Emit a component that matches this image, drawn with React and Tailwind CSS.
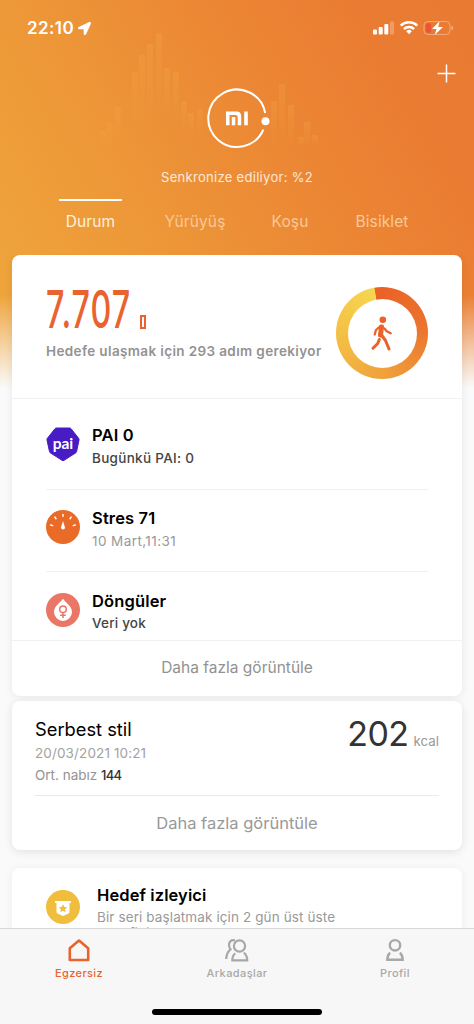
import React from "react";
import { FaLocationArrow } from "react-icons/fa";

const bars = [
  [100, 131, 12], [107, 123, 20], [115, 107, 34],
  [132, 72, 50], [139, 55, 70], [147, 44, 80], [156, 33, 84], [164, 68, 50], [173, 72, 50],
  [181, 101, 34], [188, 113, 24], [197, 109, 24], [271, 101, 42], [279, 84, 58], [288, 105, 40],
  [298, 137, 8], [304, 122, 22], [312, 135, 10],
];

function Wave() {
  return (
    <svg className="absolute left-0 top-0" width="474" height="200" aria-hidden="true">
      <defs>
        <linearGradient id="bar" x1="0" y1="0" x2="0" y2="1">
          <stop offset="0" stopColor="#f3a640" stopOpacity=".32" />
          <stop offset="1" stopColor="#f0a040" stopOpacity=".04" />
        </linearGradient>
      </defs>
      {bars.map(([x, y, h]) => (
        <rect key={x} x={x} y={y} width="6" height={h} rx="1" fill="url(#bar)" />
      ))}
    </svg>
  );
}

function StatusBar() {
  return (
    <div className="flex h-14 items-center justify-between pl-[27px] pr-5">
      <div className="flex items-center gap-[4px]">
        <span className="text-[17px] font-semibold leading-5 tracking-[0.4px]">22:10</span>
        <FaLocationArrow className="size-[13px]" />
      </div>
      <svg width="82" height="16" viewBox="0 0 82 16" fill="#fff">
        <rect x="1" y="9.5" width="4" height="5" rx="1" />
        <rect x="6.7" y="7" width="4" height="7.5" rx="1" />
        <rect x="12.3" y="4" width="4" height="10.500" rx="1" />
        <rect x="18" y="1.500" width="4" height="13" rx="1" opacity=".25" />
        <g fill="none" stroke="#fff" strokeWidth="2.500">
          <path d="M28.700 5.700a12 12 0 0 1 16.600 0" />
          <path d="M31.900 9a7.500 7.500 0 0 1 10.200 0" />
        </g>
        <path d="M34.200 11.200a4 4 0 0 1 5.600 0L37 14.200z" />
        <rect x="52" y="1.500" width="26" height="13" rx="4" fill="none" stroke="#fff" strokeOpacity=".35" />
        <rect x="53.700" y="3.200" width="5.500" height="9.600" rx="2" fill="#ea5532" />
        <path d="M79.500 5.800c2 .8 2 3.600 0 4.400z" opacity=".5" />
        <path d="M67.500 1.200 60 9h4.500l-1.800 6L71 7h-4.700z" />
      </svg>
    </div>
  );
}

function MiLogo() {
  return (
    <svg className="mx-auto block" width="66" height="62" viewBox="204 86 66 62" fill="none">
      <path d="M265.200 112A28.700 28.700 0 1 0 263.400 128.500" stroke="#fff" strokeWidth="2" />
      <circle cx="265.500" cy="120.300" r="4" fill="#fff" />
      <g fill="#fff">
        <path d="M226 110.500h10.500q4.700 0 4.700 4.700V124.300h-3.500v-8.300q0-2-2-2h-6.200V124.300H226z" />
        <rect x="231.800" y="116" width="3.500" height="8.300" />
        <rect x="244.200" y="110.500" width="3.600" height="13.800" />
      </g>
    </svg>
  );
}

function Walker() {
  return (
    <svg width="24" height="38" viewBox="371 313 24 38" fill="none" stroke="#eb6129" strokeLinecap="round" strokeLinejoin="round">
      <circle cx="383.800" cy="318.700" r="3.300" fill="#eb6129" stroke="none" />
      <path d="M382.500 326l-1 8" strokeWidth="5" />
      <path d="M381.500 325l-4.500 4-1.300 4.500M385.500 327.500l2.200 2.700 4 2" strokeWidth="2.300" />
      <path d="M382.500 334l4 5.500 3.500 8.500M380.300 338.500l-1.600 4-4.700 4.700" strokeWidth="3" />
    </svg>
  );
}

function PaiIcon() {
  return (
    <div className="relative grid size-[34px] place-items-center">
      <svg className="absolute inset-0" width="34" height="34" viewBox="0 0 34 34">
        <path d="M10.500 1h13q1 0 1.600.8l7.500 9.500q.6.800.4 1.800l-2.400 11.500q-.2 1-1.200 1.500l-11.300 7.200q-1 .6-2.100 0L4.700 26.100q-1-.5-1.200-1.500L1 13.100q-.2-1 .4-1.800L8.900 1.800Q9.500 1 10.500 1z" fill="#471cc5" stroke="#471cc5" />
      </svg>
      <span className="relative -top-px font-[Lato,sans-serif] text-[15.500px] font-bold leading-4 text-white">pai</span>
    </div>
  );
}

function StressIcon() {
  return (
    <svg width="34" height="34" viewBox="0 0 34 34">
      <circle cx="17" cy="17" r="17" fill="#ea6a28" />
      <path d="M17 11l2 6.500a2 2 0 1 1-4 0z" fill="#fff" />
      <path d="M17 4.500v1.800M8.800 7l1.200 1.700M25.200 7l-1.200 1.700M4.700 15l2 .6M29.300 15l-2 .6" stroke="#fff" strokeWidth="1.500" strokeLinecap="round" />
    </svg>
  );
}

function CycleIcon() {
  return (
    <svg width="34" height="34" viewBox="0 0 34 34" fill="none">
      <circle cx="17" cy="17" r="17" fill="#ea7665" />
      <path d="M17 5.800C19 9.200 26 13 26 19a9 9 0 0 1-18 0C8 13 15 9.200 17 5.800z" fill="#fff" />
      <circle cx="17" cy="16.300" r="3.300" stroke="#ea7665" strokeWidth="1.500" />
      <path d="M17 19.800v5.200M14.200 22.300h5.600" stroke="#ea7665" strokeWidth="1.500" />
    </svg>
  );
}

function GoalIcon() {
  return (
    <svg width="34" height="34" viewBox="0 0 34 34">
      <circle cx="17" cy="17" r="17" fill="#f0bd3c" />
      <path d="M9 11h16v2h-1.500v9q0 1-1 1.400L17 26l-5.500-2.600q-1-.4-1-1.400v-9H9z" fill="#fff" />
      <path d="M17 14.300l1.300 2.600 2.900.4-2.100 2 .5 2.900-2.600-1.400-2.600 1.400.5-2.900-2.100-2 2.900-.4z" fill="#f0bd3c" />
    </svg>
  );
}

function Row({ icon, title, sub, subClass, sizeClass }) {
  return (
    <div className={"mx-[34px] flex items-center gap-3 " + sizeClass}>
      {icon}
      <div className="pt-[3px]">
        <div className="text-[16.500px] font-semibold leading-6 tracking-[0.15px] text-black">{title}</div>
        <div className={"text-[13.500px] leading-[22px] " + subClass}>{sub}</div>
      </div>
    </div>
  );
}

function NavItem({ label, active, children }) {
  return (
    <div className={"flex w-[158px] flex-col items-center " + (active ? "text-[#e9642c]" : "text-[#a8a8a8]")}>
      {children}
      <span className="mt-[3px] text-[11px] font-medium leading-4 tracking-[0.4px]">{label}</span>
    </div>
  );
}

export default function App() {
  return (
    <div className="relative flex h-[1024px] w-[474px] flex-col overflow-hidden bg-[#fafafa] bg-[linear-gradient(180deg,transparent_295px,#fafafa_388px),linear-gradient(60deg,#efa43b_8%,#ed9738_35%,#ec8935_57%,#ea7c32_82%,#e97a32_100%)] bg-[length:474px_390px] bg-no-repeat font-[Inter,sans-serif] text-white">
      <Wave />
      <header className="relative h-[255px] shrink-0">
        <StatusBar />
        <div className="flex h-[31px] justify-end pr-[18px] pt-2">
          <svg width="19" height="19" viewBox="0 0 19 19" stroke="#fff" strokeWidth="1.500"><path d="M.5 9.500h18M9.500.5v18" /></svg>
        </div>
        <MiLogo />
        <div className="mt-[18px] text-center text-[13px] leading-5 tracking-[0.3px] text-white/80">Senkronize ediliyor: %2</div>
        <nav className="mt-3 flex pl-[59px] text-[15.500px] leading-5 tracking-[0.1px] text-[#fac896]">
          <span className="w-[63px] border-t-2 border-white pt-[11px] text-center text-[#fff0dc]">Durum</span>
          <span className="ml-[34px] w-[78px] pt-[13px] text-center">Yürüyüş</span>
          <span className="ml-[17px] w-[78px] pt-[13px] text-center">Koşu</span>
          <span className="ml-[14px] w-[78px] pt-[13px] text-center">Bisiklet</span>
        </nav>
      </header>

      <main className="relative flex min-h-0 flex-1 flex-col overflow-hidden px-3">
        <section className="h-[441px] shrink-0 rounded-lg bg-white shadow-[0_1px_8px_rgba(0,0,0,0.08)]">
          <div className="flex h-[144px] justify-between border-b border-[#f1f1f1] px-[34px] pt-8">
            <div>
              <div className="flex h-[46px] items-end text-[#e8632f]">
                <span className="w-[94px] origin-left scale-x-[0.62] text-[52px] font-medium leading-[46px] tracking-[1.600px]">7.707</span>
                <span className="mb-[4px] h-[14px] w-[6px] border-2 border-[#e8632f]" />
              </div>
              <div className="mt-2 whitespace-nowrap text-[13.500px] font-semibold leading-5 tracking-[0.37px] text-[#929292]">Hedefe ulaşmak için 293 adım gerekiyor</div>
            </div>
            <div className="-ml-4 grid size-[92px] shrink-0 place-items-center rounded-full bg-[conic-gradient(from_-6deg,#ea6027,#eb752e_90deg,#f0a23c_185deg,#f3b942_250deg,#f6d650_356deg,#ea6027_357deg)]">
              <div className="grid size-[69px] place-items-center rounded-full bg-white"><Walker /></div>
            </div>
          </div>
          <Row sizeClass="h-[91px] border-b border-[#f1f1f1]" icon={<PaiIcon />} title="PAI 0" sub="Bugünkü PAI: 0" subClass="font-medium text-[#444] tracking-[0.3px]" />
          <Row sizeClass="h-[82px] border-b border-[#f1f1f1] pb-[7px]" icon={<StressIcon />} title="Stres 71" sub="10 Mart,11:31" subClass="text-[#999] tracking-[0.42px]" />
          <Row sizeClass="h-[68px] pt-[7px]" icon={<CycleIcon />} title="Döngüler" sub="Veri yok" subClass="-mt-px font-medium text-[#444] tracking-[0.2px]" />
          <div className="flex h-[56px] items-center justify-center border-t border-[#f1f1f1] pb-px text-[15.500px] text-[#929292]">Daha fazla görüntüle</div>
        </section>

        <section className="mt-[5px] h-[149px] shrink-0 rounded-lg bg-white px-[23px] shadow-[0_2px_10px_rgba(0,0,0,0.1)]">
          <div className="flex h-[95px] justify-between border-b border-[#eaeaea] pt-[15px]">
            <div>
              <div className="text-[18.300px] leading-[26px] text-black">Serbest stil</div>
              <div className="text-[13.500px] leading-[22px] tracking-[0.12px] text-[#a2a2a2]">20/03/2021 10:21</div>
              <div className="text-[13.500px] leading-[22px] text-[#929292]">Ort. nabız <span className="text-[13px] font-medium tracking-[-0.7px] text-[#333]">144</span></div>
            </div>
            <div className="flex h-9 items-baseline gap-[5px] leading-9">
              <span className="text-[34px] tracking-[-0.5px] text-[#333]">202</span>
              <span className="text-[13.300px] text-[#999]">kcal</span>
            </div>
          </div>
          <div className="flex h-[54px] items-center justify-center text-[16.500px] text-[#999]">Daha fazla görüntüle</div>
        </section>

        <section className="mt-[18px] h-[100px] shrink-0 rounded-t-lg bg-white px-[34px] pt-4 shadow-[0_1px_10px_rgba(0,0,0,0.06)]">
          <div className="flex gap-[17px]">
            <div className="mt-[6px]"><GoalIcon /></div>
            <div>
              <div className="text-[16.500px] font-semibold leading-[22px] tracking-[0.1px] text-black">Hedef izleyici</div>
              <div className="mt-[3px] w-[260px] text-[13.500px] leading-[16px] tracking-[0.11px] text-[#999]">Bir seri başlatmak için 2 gün üst üste hedefinize ulaşın.</div>
            </div>
          </div>
        </section>
      </main>

      <footer className="relative h-24 shrink-0 border-t border-[#d8d8d8] bg-[#f7f7f7]">
        <div className="flex pt-[9px]">
          <NavItem label="Egzersiz" active>
            <svg width="24" height="24" viewBox="0 0 24 24" fill="none" stroke="currentColor" strokeWidth="2.600" strokeLinejoin="round"><path d="M2.800 10.300 12 2.500l9.200 7.800V22H2.800z" /></svg>
          </NavItem>
          <NavItem label="Arkadaşlar">
            <svg width="26" height="24" viewBox="0 0 26 24" fill="none" stroke="currentColor" strokeWidth="2.200"><circle cx="15.500" cy="8" r="5.600" /><path d="M11.300 15.300Q8.300 17.500 8.300 22.300h14.900q0-5-3.400-7.700M11 2.300Q6 1.300 5 6.300q-.2 3 1.500 5Q2.500 14.500 2.200 21" /></svg>
          </NavItem>
          <NavItem label="Profil">
            <svg width="20" height="24" viewBox="0 0 20 24" fill="none" stroke="currentColor" strokeWidth="2.400"><circle cx="10" cy="7.300" r="5.200" /><path d="M5.200 14.800Q2.300 17 2.300 21.800h15.400q0-4.800-2.900-7" /></svg>
          </NavItem>
        </div>
        <div className="mx-auto mt-[28px] h-1.5 w-[170px] rounded-full bg-black" />
      </footer>
    </div>
  );
}
